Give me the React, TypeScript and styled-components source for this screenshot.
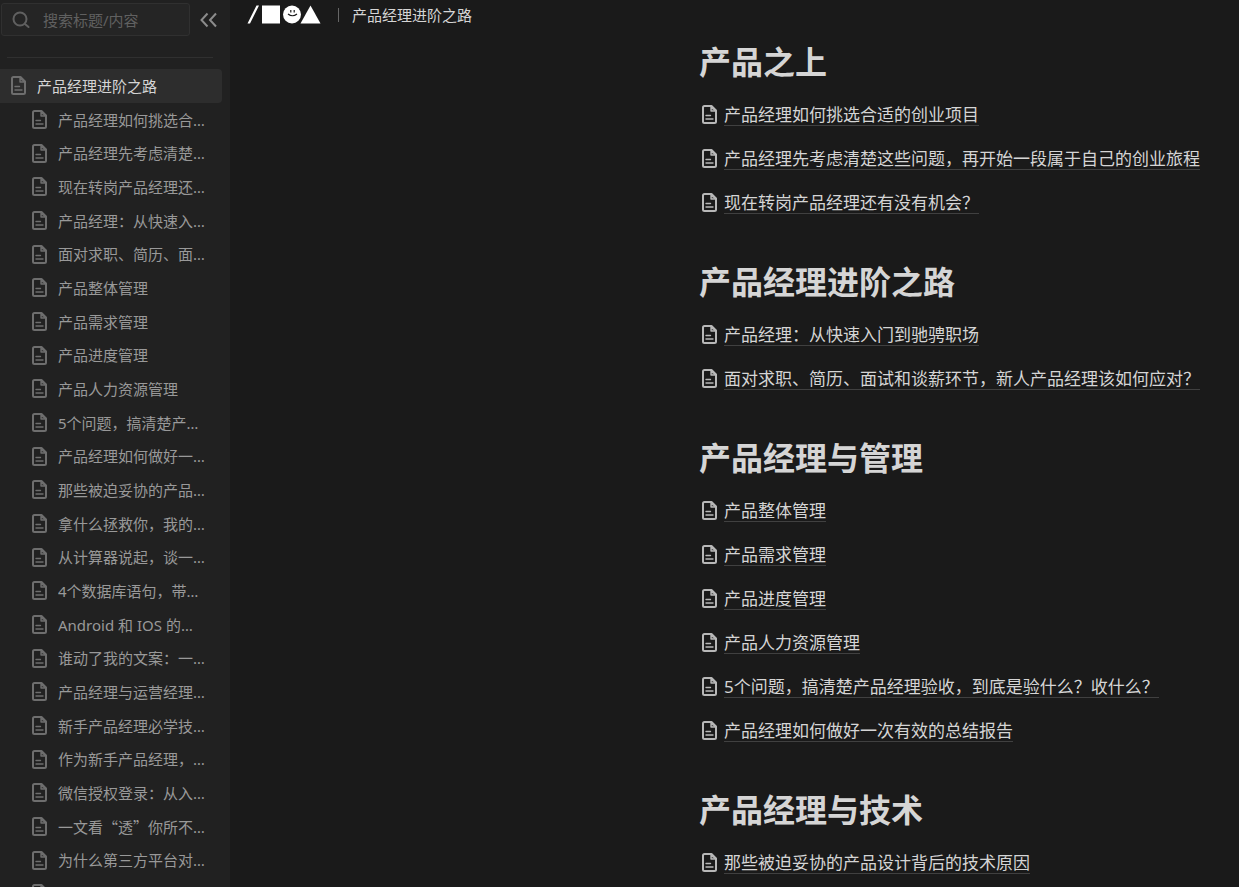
import React from "react";
import styled, { createGlobalStyle } from "styled-components";

const GlobalStyle = createGlobalStyle`
  * { box-sizing: border-box; }
  body {
    margin: 0;
    background: #1a1a1a;
    color: #d5d5d5;
    font-family: "Noto Sans", "Noto Sans CJK SC", sans-serif;
    font-size: 15px;
  }
`;

const Page = styled.div`
  display: grid;
  grid-template-columns: 230px minmax(0, 1fr);
  height: 100vh;
  overflow: hidden;
`;

const Sidebar = styled.aside`
  min-height: 0;
  overflow: hidden;
  background: #212121;
`;

const SearchBar = styled.div`
  display: flex;
  align-items: center;
  gap: 10px;
  padding: 3px 13px 0 1px;
`;

const SearchBox = styled.label`
  display: flex;
  align-items: center;
  flex: 1;
  min-width: 0;
  height: 33px;
  padding: 0 10px;
  gap: 13px;
  border: 1px solid #303030;
  border-radius: 3px;
  background: #252525;
  color: #606060;
`;

const SearchInput = styled.input`
  flex: 1;
  min-width: 0;
  padding: 0;
  border: 0;
  outline: 0;
  background: transparent;
  color: #d5d5d5;
  font: inherit;
  &::placeholder { color: #606060; opacity: 1; }
`;

const CollapseButton = styled.button`
  display: flex;
  padding: 0;
  border: 0;
  background: none;
  color: #8c8c8c;
  cursor: pointer;
`;

const Divider = styled.hr`
  margin: 21px 17px 11px 7px;
  border: 0;
  border-top: 1px solid #303030;
`;

const NavList = styled.ul`
  margin: 0;
  padding: 0 8px 0 0;
  list-style: none;
`;

const NavItem = styled.li`
  height: 34px;
  &:nth-child(3n) { height: 33px; }
`;

const NavLink = styled.a<{ $active?: boolean }>`
  display: flex;
  align-items: center;
  gap: 10px;
  height: 100%;
  padding: 0 16px 0 ${(p) => (p.$active ? 10 : 31)}px;
  border-radius: 0 4px 4px 0;
  background: ${(p) => (p.$active ? "#2d2d2d" : "transparent")};
  color: ${(p) => (p.$active ? "#d5d5d5" : "#999")};
  text-decoration: none;
  & > svg { color: #6e6e6e; }
`;

const NavLabel = styled.span`
  flex: 1;
  min-width: 0;
  overflow: hidden;
  padding-bottom: 1px;
  line-height: 24px;
  text-overflow: ellipsis;
  white-space: nowrap;
`;

const QuotedTitle = styled.span`
  font-family: "Noto Sans CJK SC", sans-serif;
`;

const Main = styled.main`
  min-width: 0;
  overflow: hidden;
`;

const Header = styled.header`
  display: flex;
  align-items: center;
  height: 30px;
  padding-left: 17px;
`;

const HomeLink = styled.a`
  display: flex;
  color: #fff;
`;

const Crumb = styled.span`
  margin-left: 17px;
  padding-left: 13px;
  border-left: 1px solid #666;
  line-height: 14px;
`;

const Article = styled.article`
  padding: 10px 0 0 469px;
`;

const Section = styled.section`
  & + & { margin-top: 35px; }
`;

const Heading = styled.h2`
  margin: 0 0 9px;
  font-size: 32px;
  font-weight: 700;
  line-height: 44px;
  white-space: nowrap;
`;

const DocList = styled.ul`
  margin: 0;
  padding: 0;
  list-style: none;
`;

const DocItem = styled.li`
  display: flex;
  align-items: center;
  gap: 6px;
  height: 44px;
  padding-left: 2px;
  & > svg { color: #b8b8b8; }
`;

const DocLink = styled.a`
  border-bottom: 1px solid #404040;
  color: #d5d5d5;
  font-size: 17px;
  line-height: 20px;
  text-decoration: none;
  white-space: nowrap;
`;

const DocIcon = styled.svg`
  flex: none;
  width: 17px;
  height: 20px;
`;

function FileIcon() {
  return (
    <DocIcon viewBox="0 0 17 20" fill="none" stroke="currentColor" strokeWidth="2" strokeLinejoin="round" aria-hidden="true">
      <path d="M10.500 1H3.500Q2 1 2 2.500V16.500Q2 18 3.500 18H13.500Q15 18 15 16.500V5.500Z" />
      <path d="M10 1.500V6H15Z" fill="currentColor" fillOpacity="0.4" strokeWidth="1.400" />
      <path d="M5 10.500H9.500M5 14H12" strokeWidth="1.400" strokeLinecap="round" />
    </DocIcon>
  );
}

function Logo() {
  return (
    <svg width="74" height="20" viewBox="0 0 74 20" fill="currentColor" role="img" aria-label="首页">
      <path d="M0.500 18.500L9.500 0.500H12L3 18.500Z" />
      <rect x="15" y="0.500" width="18" height="18" />
      <circle cx="45" cy="9.500" r="9" />
      <path d="M63.500 0.500L73.500 18.500H53.500Z" />
      <path d="M41 9Q45.500 12.500 50 9M43.800 5V7.500M47.200 5V7.500" fill="none" stroke="#1a1a1a" strokeWidth="1.200" />
    </svg>
  );
}

const children = [
  "产品经理如何挑选合适的创业项目",
  "产品经理先考虑清楚这些问题，再开始一段属于自己的创业旅程",
  "现在转岗产品经理还有没有机会？",
  "产品经理：从快速入门到驰骋职场",
  "面对求职、简历、面试和谈薪环节，新人产品经理该如何应对？",
  "产品整体管理",
  "产品需求管理",
  "产品进度管理",
  "产品人力资源管理",
  "5个问题，搞清楚产品经理验收，到底是验什么？收什么？",
  "产品经理如何做好一次有效的总结报告",
  "那些被迫妥协的产品设计背后的技术原因",
  "拿什么拯救你，我的产品",
  "从计算器说起，谈一谈产品",
  "4个数据库语句，带你入门",
  "Android 和 IOS 的产品",
  "谁动了我的文案：一次复盘",
  "产品经理与运营经理的合作",
  "新手产品经理必学技能",
  "作为新手产品经理，如何成长",
  "微信授权登录：从入门到精通",
  "一文看“透”你所不知道的产品",
  "为什么第三方平台对接",
  "产品经理进阶",
];

const sections = [
  { title: "产品之上", docs: children.slice(0, 3) },
  { title: "产品经理进阶之路", docs: children.slice(3, 5) },
  { title: "产品经理与管理", docs: children.slice(5, 11) },
  { title: "产品经理与技术", docs: children.slice(11, 12) },
];

export default function App() {
  return (
    <>
      <GlobalStyle />
      <Page>
        <Sidebar>
          <SearchBar>
            <SearchBox>
              <svg width="18" height="18" viewBox="0 0 18 18" fill="none" stroke="currentColor" strokeWidth="2" strokeLinecap="round" aria-hidden="true">
                <circle cx="8" cy="8" r="6.500" />
                <path d="M13 13L16.500 16" />
              </svg>
              <SearchInput type="search" placeholder="搜索标题/内容" aria-label="搜索标题/内容" />
            </SearchBox>
            <CollapseButton type="button" aria-label="收起目录">
              <svg width="17" height="16" viewBox="0 0 17 16" fill="none" stroke="currentColor" strokeWidth="2" aria-hidden="true">
                <path d="M7.500 1.500L1.500 8L7.500 14.500M16 1.500L10 8L16 14.500" />
              </svg>
            </CollapseButton>
          </SearchBar>
          <Divider />
          <nav aria-label="目录">
            <NavList>
              <NavItem>
                <NavLink href="#" $active aria-current="page">
                  <FileIcon />
                  <NavLabel>产品经理进阶之路</NavLabel>
                </NavLink>
              </NavItem>
              {children.map((title) => (
                <NavItem key={title}>
                  <NavLink href="#">
                    <FileIcon />
                    <NavLabel>{title.includes("“") ? <QuotedTitle>{title}</QuotedTitle> : title}</NavLabel>
                  </NavLink>
                </NavItem>
              ))}
            </NavList>
          </nav>
        </Sidebar>
        <Main>
          <Header>
            <HomeLink href="#"><Logo /></HomeLink>
            <Crumb>产品经理进阶之路</Crumb>
          </Header>
          <Article>
            {sections.map((section) => (
              <Section key={section.title}>
                <Heading>{section.title}</Heading>
                <DocList>
                  {section.docs.map((doc) => (
                    <DocItem key={doc}>
                      <FileIcon />
                      <DocLink href="#">{doc}</DocLink>
                    </DocItem>
                  ))}
                </DocList>
              </Section>
            ))}
          </Article>
        </Main>
      </Page>
    </>
  );
}
